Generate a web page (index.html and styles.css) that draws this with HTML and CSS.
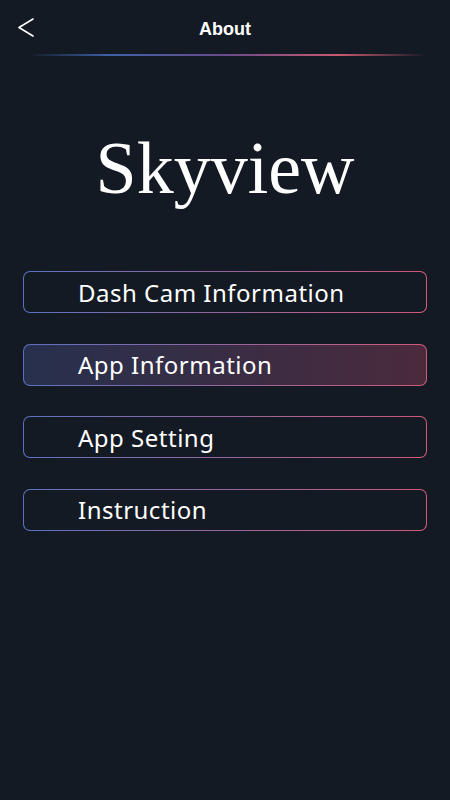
FILE: index.html
```html
<!DOCTYPE html>
<html lang="en">
<head>
    <meta charset="UTF-8">
    <meta name="viewport" content="width=device-width, initial-scale=1.0">
    <title>About</title>
    <link rel="stylesheet" href="styles.css">
</head>
<body>
    <div id="page">
        <div class="top-bar">
            <button type="button" class="back-btn" aria-label="Back">
                <svg width="20" height="20" viewBox="0 0 20 20">
                    <polyline points="16,1 2,9.5 16,18" fill="none" stroke="#ffffff" stroke-width="1.6" stroke-linecap="round" stroke-linejoin="round"/>
                </svg>
            </button>
            <h1 class="page-title">About</h1>
        </div>
        <div class="title-line"></div>

        <div class="brand">Skyview</div>

        <div class="menu">
            <div class="menu-item">Dash Cam Information</div>
            <div class="menu-item active">App Information</div>
            <div class="menu-item">App Setting</div>
            <div class="menu-item">Instruction</div>
        </div>
    </div>
</body>
</html>
```

FILE: styles.css
```css
body, html {
    margin: 0;
    height: 100%;
    background-color: #141a23;
}
#page {
    min-height: 100%;
    color: #ffffff;
    font-family: "Noto Sans", "Open Sans", sans-serif;
}

.top-bar {
    position: relative;
    height: 54px;
    display: flex;
    align-items: center;
    justify-content: center;
}
.back-btn {
    position: absolute;
    left: 17px;
    top: 18px;
    padding: 0;
    border: none;
    background: none;
    line-height: 0;
}
.page-title {
    margin: 0;
    font-family: "Liberation Sans", Arial, sans-serif;
    font-size: 18px;
    font-weight: bold;
    position: relative;
    top: 2px;
}
.title-line {
    height: 2px;
    margin: 0 24px 0 28px;
    background: linear-gradient(to right, rgba(59, 91, 160, 0) 0%, #3c5ea6 20%, #6a4a8a 50%, #c95a70 78%, rgba(200, 80, 100, 0) 100%);
}

.brand {
    margin-top: 72px;
    text-align: center;
    font-family: "Liberation Serif", "Times New Roman", serif;
    font-size: 74px;
    line-height: 80px;
}

.menu {
    margin: 63px 23px 0 23px;
    display: flex;
    flex-direction: column;
    gap: 30.5px;
}
.menu-item {
    box-sizing: border-box;
    height: 42px;
    padding-left: 54px;
    display: flex;
    align-items: center;
    font-size: 24px;
    letter-spacing: 0.5px;
    border: 1.5px solid transparent;
    border-radius: 7px;
    background:
        linear-gradient(#141a23, #141a23) padding-box,
        linear-gradient(to right, #5b72c2, #d05a78) border-box;
}
.menu-item.active {
    background:
        linear-gradient(to right, #27304d, #4b2a3c) padding-box,
        linear-gradient(to right, #5b72c2, #d05a78) border-box;
}
```
